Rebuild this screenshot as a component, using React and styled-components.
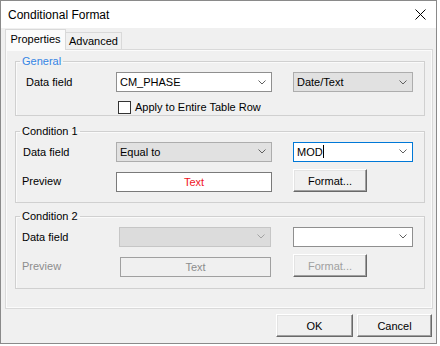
import styled, { createGlobalStyle } from "styled-components";

const GlobalStyle = createGlobalStyle`
  body {
    margin: 0;
    background: #ffffff;
    font-family: "Liberation Sans", Arial, sans-serif;
    font-size: 11px;
    color: #000;
  }
`;

const Window = styled.div`
  box-sizing: border-box;
  width: 437px;
  height: 344px;
  border: 1px solid #8a8a8a;
  display: flex;
  flex-direction: column;
  background: #f0f0f0;
`;

const TitleBar = styled.div`
  height: 27px;
  background: #ffffff;
  display: flex;
  align-items: center;
  justify-content: space-between;
  padding: 0 10px 0 7px;
  font-size: 12px;
`;

const Body = styled.div`
  flex: 1;
  display: flex;
  flex-direction: column;
  padding: 1px 3px 0 4px;
`;

const TabStrip = styled.div`
  display: flex;
  align-items: flex-end;
  height: 20px;
`;

const Tab = styled.div`
  box-sizing: border-box;
  width: ${(p) => p.$w}px;
  height: ${(p) => (p.$active ? 21 : 17)}px;
  margin-bottom: ${(p) => (p.$active ? -1 : 0)}px;
  border: 1px solid #d9d9d9;
  border-bottom: none;
  border-left-width: ${(p) => (p.$active ? 1 : 0)}px;
  background: ${(p) => (p.$active ? "#fbfbfb" : "#f0f0f0")};
  display: flex;
  align-items: center;
  justify-content: center;
  padding-bottom: ${(p) => (p.$active ? 2 : 0)}px;
  position: relative;
  z-index: ${(p) => (p.$active ? 1 : 0)};
`;

const Panel = styled.div`
  box-sizing: border-box;
  height: 260px;
  border: 1px solid #d9d9d9;
  box-shadow: inset 1px 1px #fbfbfb, inset -1px -1px #fbfbfb;
  background: #f0f0f0;
  padding: 4px 0 0 9px;
  display: flex;
  flex-direction: column;
`;

const Group = styled.fieldset`
  box-sizing: border-box;
  width: 410px;
  margin: ${(p) => p.$top}px 0 0 0;
  padding: ${(p) => p.$pt}px 0 ${(p) => p.$pb}px 6px;
  border: 1px solid #d0d0d0;
  box-shadow: inset 1px 1px #fafafa;
  min-inline-size: 0;
`;

const Legend = styled.legend`
  padding: 0 2px;
  margin-left: -2px;
  line-height: 14px;
  color: ${(p) => (p.$accent ? "#3585e4" : "#000")};
`;

const Rows = styled.div`
  display: grid;
  grid-template-columns: 94px 156px 21px 120px;
  grid-template-rows: ${(p) => p.$rows};
  row-gap: ${(p) => p.$gap}px;
  align-items: center;
`;

const Label = styled.span`
  grid-column: 1;
  padding-left: ${(p) => p.$indent || 0}px;
  color: ${(p) => (p.$disabled ? "#8d8d8d" : "#000")};
`;

const comboStyles = {
  edit: { bg: "#ffffff", border: "#8f8f8f", chev: "#606060" },
  list: { bg: "#e1e1e1", border: "#adadad", chev: "#606060" },
  focus: { bg: "#ffffff", border: "#0078d7", chev: "#606060" },
  disabled: { bg: "#dcdcdc", border: "#c6c6c6", chev: "#a3a3a3" },
};

const ComboBox = styled.div`
  grid-column: ${(p) => p.$col};
  box-sizing: border-box;
  height: 20px;
  margin-left: ${(p) => p.$inset || 0}px;
  margin-right: ${(p) => (p.$inset ? 1 : 0)}px;
  display: flex;
  align-items: center;
  justify-content: space-between;
  padding: 0 5px 0 3px;
  border: 1px solid ${(p) => comboStyles[p.$variant].border};
  background: ${(p) => comboStyles[p.$variant].bg};
`;

const Caret = styled.span`
  display: inline-block;
  width: 1px;
  height: 13px;
  background: #000;
  vertical-align: -2px;
`;

const CheckRow = styled.label`
  grid-column: 2 / 5;
  display: flex;
  align-items: center;
  gap: 4px;
  padding-left: 2px;
`;

const CheckBox = styled.span`
  box-sizing: border-box;
  width: 13px;
  height: 13px;
  border: 1px solid #333333;
  background: #ffffff;
`;

const PreviewBox = styled.div`
  grid-column: 2;
  box-sizing: border-box;
  height: 20px;
  margin-top: 3px;
  margin-left: ${(p) => p.$inset || 0}px;
  margin-right: ${(p) => (p.$inset ? 1 : 0)}px;
  display: flex;
  align-items: center;
  justify-content: center;
  border: 1px solid ${(p) => (p.$disabled ? "#a0a0a0" : "#7a7a7a")};
  background: ${(p) => (p.$disabled ? "#f0f0f0" : "#ffffff")};
  color: ${(p) => (p.$disabled ? "#8d8d8d" : "#f0141e")};
`;

const Button = styled.button`
  box-sizing: border-box;
  width: ${(p) => p.$w}px;
  height: 23px;
  grid-column: ${(p) => p.$col || "auto"};
  padding: 0;
  font: inherit;
  color: ${(p) => (p.disabled ? "#a0a0a0" : "#000")};
  background: #f0f0f0;
  border: 1px solid;
  border-color: #ffffff #696969 #696969 #ffffff;
  box-shadow: inset -1px -1px #a0a0a0, inset 1px 1px #e3e3e3;
`;

const Footer = styled.div`
  display: flex;
  justify-content: flex-end;
  gap: 4px;
  padding: 5px 1px 0 0;
`;

const Chevron = ({ color }) => (
  <svg width="8" height="5" viewBox="0 0 8 5">
    <path d="M0.5 0.5 L4 4 L7.5 0.5" fill="none" stroke={color} strokeWidth="1" />
  </svg>
);

const CloseIcon = () => (
  <svg width="11" height="11" viewBox="0 0 11 11">
    <path d="M0.5 0.5 L10.5 10.5 M10.5 0.5 L0.5 10.5" stroke="#000" strokeWidth="1" />
  </svg>
);

const Combo = ({ col, variant, inset, children }) => (
  <ComboBox $col={col} $variant={variant} $inset={inset}>
    <span>{children}</span>
    <Chevron color={comboStyles[variant].chev} />
  </ComboBox>
);

export default function App() {
  return (
    <>
      <GlobalStyle />
      <Window>
        <TitleBar>
          <span>Conditional Format</span>
          <CloseIcon />
        </TitleBar>
        <Body>
          <TabStrip>
            <Tab $active $w={61}>Properties</Tab>
            <Tab $w={56}>Advanced</Tab>
          </TabStrip>
          <Panel>
            <Group $top={0} $pt={3} $pb={1}>
              <Legend $accent>General</Legend>
              <Rows $rows="22px 14px" $gap={7}>
                <Label $indent={4}>Data field</Label>
                <Combo col={2} variant="edit">CM_PHASE</Combo>
                <Combo col={4} variant="list">Date/Text</Combo>
                <CheckRow>
                  <CheckBox />
                  Apply to Entire Table Row
                </CheckRow>
              </Rows>
            </Group>

            <Group $top={8} $pt={2} $pb={10}>
              <Legend>Condition 1</Legend>
              <Rows $rows="23px 23px" $gap={6}>
                <Label $indent={1}>Data field</Label>
                <Combo col={2} variant="list">Equal to</Combo>
                <Combo col={4} variant="focus">
                  MOD<Caret />
                </Combo>
                <Label>Preview</Label>
                <PreviewBox>Text</PreviewBox>
                <Button $w={74} $col={4}>Format...</Button>
              </Rows>
            </Group>

            <Group $top={6} $pt={2} $pb={11}>
              <Legend>Condition 2</Legend>
              <Rows $rows="23px 23px" $gap={6}>
                <Label>Data field</Label>
                <Combo col={2} variant="disabled" inset={3} />
                <Combo col={4} variant="edit" />
                <Label $disabled>Preview</Label>
                <PreviewBox $disabled $inset={4}>Text</PreviewBox>
                <Button $w={74} $col={4} disabled>Format...</Button>
              </Rows>
            </Group>
          </Panel>
          <Footer>
            <Button $w={77}>OK</Button>
            <Button $w={75}>Cancel</Button>
          </Footer>
        </Body>
      </Window>
    </>
  );
}
